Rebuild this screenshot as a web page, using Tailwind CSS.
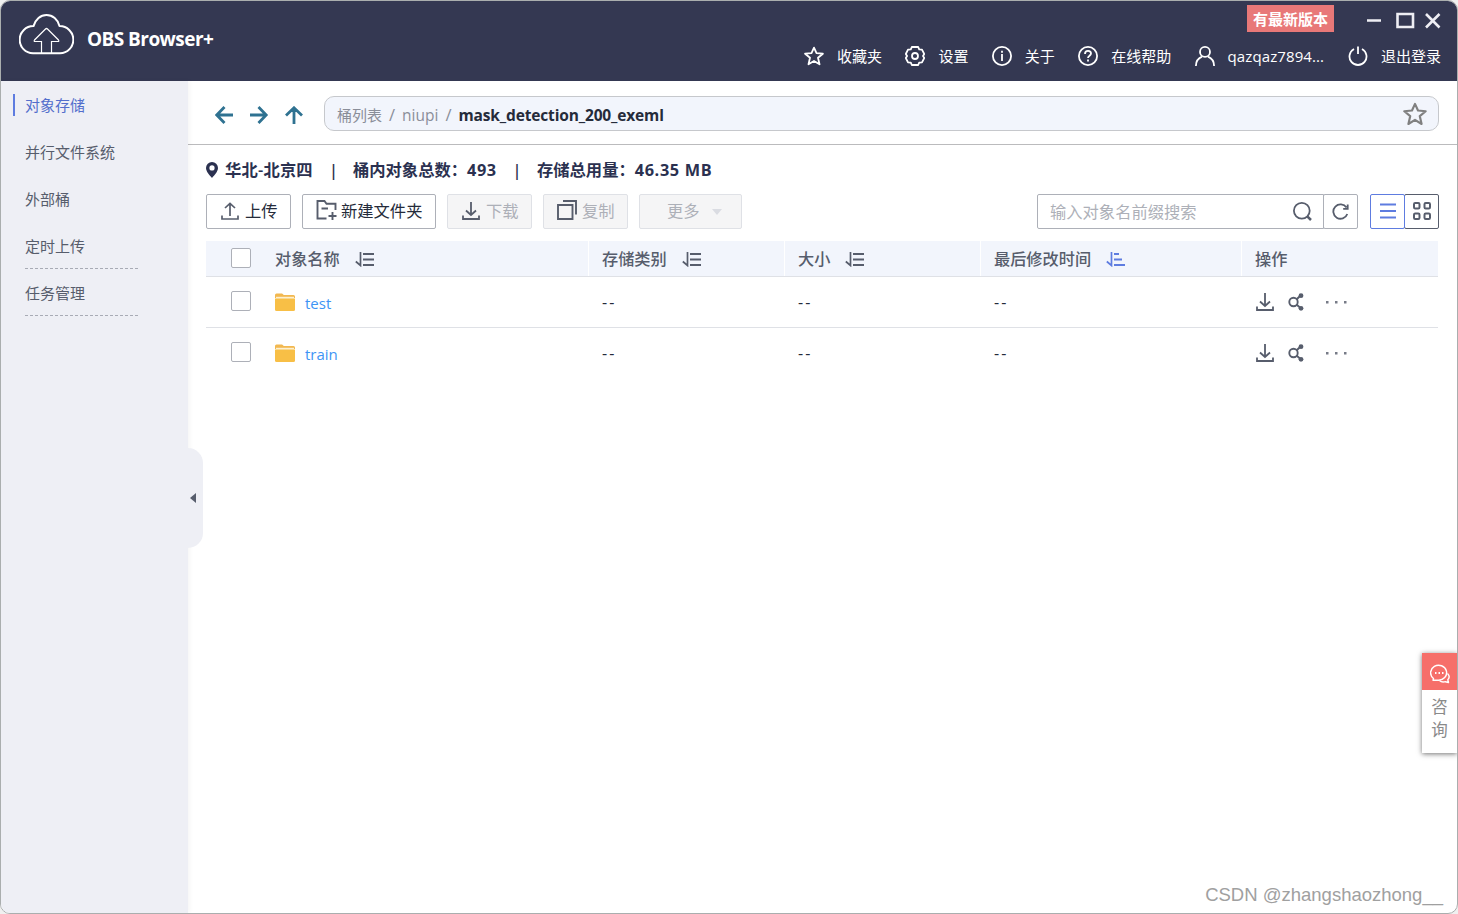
<!DOCTYPE html>
<html lang="zh-CN">
  <head>
    <meta charset="utf-8" />
    <title>OBS Browser+</title>
    <meta name="viewport" content="width=device-width, initial-scale=1" />
    <script src="https://cdn.jsdelivr.net/npm/@tailwindcss/browser@4"></script>
  </head>

  <body class="bg-[#f0f0f0] overflow-hidden font-['Open_Sans','Noto_Sans_CJK_SC',sans-serif] text-[15px] text-[#575d6c]">
    <!-- shared icons -->
    <svg class="hidden">
      <symbol id="star" viewBox="0 0 20 20">
        <path d="M10 1.6l2.5 5.5 6.4.6-4.9 4.1 1.5 6.5L10 14.9l-5.5 3.4L6 11.8 1.1 7.7l6.4-.6z" fill="none" stroke="currentColor" stroke-width="1.8" stroke-linejoin="round" />
      </symbol>
      <symbol id="download" viewBox="0 0 18 18">
        <path d="M9 0v12.5M4 8.5l5 4.5 5-4.5M1 13.5V17h16v-3.5" fill="none" stroke="currentColor" stroke-width="1.8" />
      </symbol>
      <symbol id="share" viewBox="0 0 16 18">
        <g fill="none" stroke="currentColor" stroke-width="1.9">
          <circle cx="5.5" cy="9" r="4.2" />
          <path d="M8.5 6.5L12 3M8.5 11.5l4 3.5" />
        </g>
        <circle cx="13" cy="2.7" r="2.4" fill="currentColor" />
        <circle cx="13" cy="15.3" r="2.4" fill="currentColor" />
      </symbol>
      <symbol id="sort" viewBox="0 0 19 15">
        <path d="M5.5 0v13.5L.8 9.5" fill="none" stroke="currentColor" stroke-width="1.7" />
        <path d="M8 2h11M8 7.5h11M8 13h11" fill="none" stroke="currentColor" stroke-width="2" />
      </symbol>
      <symbol id="folder" viewBox="0 0 20 18">
        <path d="M0 2A1.5 1.5 0 0 1 1.5.5h5.6L8.8 2h9.7A1.5 1.5 0 0 1 20 3.5V5H0z" fill="#f2b850" />
        <rect x="1" y="3.8" width="18" height="2" fill="#fdf0d0" />
        <path d="M0 5.500h20v11a1.5 1.5 0 0 1-1.5 1.5h-17A1.5 1.5 0 0 1 0 16.500z" fill="#f8bf46" />
      </symbol>
    </svg>

    <div class="relative w-[1458px] h-[914px] flex flex-col border border-[#aaaeae] rounded-[10px] bg-white overflow-hidden">
      <header class="h-20 shrink-0 flex justify-between bg-[#343852] text-white">
        <div class="flex items-start pl-[18px] pt-[13px]">
          <svg class="w-[55px] h-[41px]" viewBox="0 0 55 41" fill="none" stroke="#fff">
            <path d="M14 39.3A13.500 13.500 0 0 1 14.500 12.100C16.500 5.500 21.500 1 27.500 1S39 5.500 40.500 12.100A13.500 13.500 0 0 1 41 39.300z" stroke-width="2" stroke-linejoin="round" />
            <path d="M22.500 39V27.500H16c-1 0-1-.8-.5-1.500l11-11c.7-.7 1.300-.7 2 0l11 11c.5.7.5 1.500-.5 1.500h-6.500V39" stroke-width="1.200" />
          </svg>
          <div class="ml-[13px] mt-[11px] text-[19px] leading-7 font-bold tracking-[-0.55px] whitespace-nowrap">OBS Browser+</div>
        </div>

        <div class="flex flex-col items-end pr-[16px]">
          <div class="flex items-center h-[34px] pt-[1px]">
            <div class="w-[87px] h-[27px] mr-[32px] bg-[#e87878] text-center leading-[28px] font-bold">有最新版本</div>
            <svg class="w-[75px] h-[17px] mt-[3px]" viewBox="0 0 75 17" fill="none" stroke="#eeeef4" stroke-width="2.600">
              <path d="M1 8.500h14M31.500 2h15.500v13h-15.500zM60 2l13.500 13.500M73.500 2l-13.500 13.500" />
            </svg>
          </div>
          <nav class="flex items-center gap-[23.400px] h-[42px] whitespace-nowrap">
            <a class="flex items-center gap-[13px]">
              <svg class="size-5"><use href="#star" /></svg>收藏夹
            </a>
            <a class="flex items-center gap-[13px]">
              <svg class="size-5" viewBox="0 0 20 20" fill="none" stroke="#fff" stroke-width="1.800">
                <path d="M6.800 1h6.400l1 2.400 2.800.3 2.300 4.300-1.300 2 1.300 2-2.300 4.300-2.800.3-1 2.400H6.800l-1-2.400-2.800-.3L.8 12l1.300-2L.8 8 3 3.700l2.800-.3z" stroke-linejoin="round" />
                <circle cx="10" cy="10" r="3" />
              </svg>设置
            </a>
            <a class="flex items-center gap-[13px]">
              <svg class="size-5" viewBox="0 0 20 20" fill="none" stroke="#fff" stroke-width="1.800">
                <circle cx="10" cy="10" r="9.100" />
                <path d="M10 8v7M10 4.800v2" />
              </svg>关于
            </a>
            <a class="flex items-center gap-[13px]">
              <svg class="size-5" viewBox="0 0 20 20" fill="none" stroke="#fff" stroke-width="1.800">
                <circle cx="10" cy="10" r="9.100" />
                <path d="M7 8c0-2 1.300-3.200 3-3.200S13 6 13 7.600c0 2-3 2.200-3 4.400M10 13.500v2" />
              </svg>在线帮助
            </a>
            <a class="flex items-center gap-[13px]">
              <svg class="size-5" viewBox="0 0 20 20" fill="none" stroke="#fff" stroke-width="1.800">
                <circle cx="10" cy="5.900" r="5" />
                <path d="M.9 20c0-5 3-8 6.100-9.300M19.100 20c0-5-3-8-6.100-9.300" />
              </svg>
              <span class="w-[97px] tracking-[0.1px]">qazqaz7894...</span>
            </a>
            <a class="flex items-center gap-[13px]">
              <svg class="size-5" viewBox="0 0 20 20" fill="none" stroke="#fff" stroke-width="1.800">
                <path d="M6 3a8.500 8.500 0 1 0 8 0M10 .5V8" />
              </svg>退出登录
            </a>
          </nav>
        </div>
      </header>

      <div class="flex flex-1 min-h-0">
        <aside class="relative z-10 w-[187px] shrink-0 bg-[#eeeff5] shadow-[2px_0_4px_rgba(0,0,0,0.04)]">
          <ul class="pl-6 leading-[22px]">
            <li class="-ml-3 mt-[13px] pl-[10px] border-l-2 border-[#5e7ce0] text-[#526ecc]">对象存储</li>
            <li class="mt-[25px]">并行文件系统</li>
            <li class="mt-[25px]">外部桶</li>
            <li class="mt-[25px]">定时上传</li>
            <li><svg class="block mt-[11px] w-[114px] h-px"><path d="M0 .5h114" stroke="#a8abb5" stroke-dasharray="3 2" /></svg></li>
            <li class="mt-[13px]">任务管理</li>
            <li><svg class="block mt-[11px] w-[114px] h-px"><path d="M0 .5h114" stroke="#a8abb5" stroke-dasharray="3 2" /></svg></li>
          </ul>
          <!-- collapse handle -->
          <div class="absolute left-[187px] top-[367px] w-[15px] h-[100px] rounded-r-[15px] bg-[#eeeff5]">
            <svg class="absolute left-[2px] top-[45px] w-[6px] h-[10px]" viewBox="0 0 6 10"><path d="M6 0v10L0 5z" fill="#575d6c" /></svg>
          </div>
        </aside>

        <main class="flex-1 min-w-0">
          <div class="h-16 flex items-center border-b border-[#bbbbbd] pl-[27px] pr-[18px]">
            <svg class="w-[88px] h-[18px] mt-[5px]" viewBox="0 0 88 18" fill="none" stroke="#2f7291" stroke-width="2.800">
              <path d="M18 9H2M9.500 1L1.800 9l7.700 8M35 9h16M43.500 1l7.700 8-7.700 8M79 18V2M71 9.500l8-7.700 8 7.700" />
            </svg>
            <div class="ml-[21px] mt-[2px] flex-1 h-[35px] flex items-center justify-between rounded-[10px] border border-[#c6c8cc] bg-[#f2f5fc] pl-[12px] pr-[11px]">
              <div class="pt-[3px] whitespace-nowrap text-[#8a8e99]">
                桶列表<span class="px-[7px] text-[16.500px]">/</span><span class="text-[15.500px]">niupi</span><span class="px-[7px] text-[16.500px]">/</span><span class="text-[15.500px] tracking-[-0.150px] font-bold text-[#252b3a]">mask_detection_200_exeml</span>
              </div>
              <svg class="size-6 text-[#808080]"><use href="#star" /></svg>
            </div>
          </div>

          <div class="flex items-center h-[22px] mt-[14px] pl-[18px] text-[16.300px] font-bold text-[#2b3150] whitespace-nowrap">
            <svg class="w-[12px] h-4 mr-[7px]" viewBox="0 0 12 16"><path fill-rule="evenodd" d="M6 0a6 6 0 0 1 6 6c0 3.500-3.500 7-6 10C3.500 13 0 9.500 0 6a6 6 0 0 1 6-6zm0 3.300a2.600 2.600 0 1 0 0 5.200 2.600 2.600 0 0 0 0-5.200z" fill="#2b3150" /></svg>
            <span class="w-[89px] font-semibold tracking-[0.200px]">华北-北京四</span>
            <span class="w-[39px] text-center font-semibold">|</span>
            <span class="w-[144px]">桶内对象总数：<span class="tracking-[0.600px]">493</span></span>
            <span class="w-[40px] text-center font-semibold">|</span>
            <span>存储总用量：<span class="tracking-[0.650px]">46.35 MB</span></span>
          </div>

          <div class="flex items-center mt-[13px] h-[35px] pl-[18px] pr-[18px] text-[16.300px] whitespace-nowrap">
            <div class="flex gap-[11px] text-[#252b3a]">
              <button class="w-[85px] h-[35px] flex items-center pl-[14px] gap-[6px] border border-[#adb0b8] rounded-[2px]">
                <svg class="w-[18px] h-[18px] shrink-0 mb-[2px]" viewBox="0 0 18 18" fill="none" stroke="#575d6c" stroke-width="1.700"><path d="M9 14V1.500M4 6l5-4.700L14 6M1 13.500V17h16v-3.500" /></svg>上传
              </button>
              <button class="w-[134px] h-[35px] flex items-center pl-[13px] gap-[4px] border border-[#adb0b8] rounded-[2px]">
                <svg class="w-[21px] h-[20px] shrink-0 mb-[3px]" viewBox="0 0 21 20" fill="none" stroke="#575d6c" stroke-width="1.900"><path d="M10.500 18.500H1.500V1h7l2 2.700h9V10M5.500 8.500H12M16.500 12v8M12.500 16h8" /></svg>新建文件夹
              </button>
              <button class="w-[85px] h-[35px] flex items-center pl-[14px] gap-[6px] border border-[#dfe1e6] rounded-[2px] bg-[#f5f5f6] text-[#adb0b8]">
                <svg class="w-[18px] h-[18px] shrink-0 mb-[2px] text-[#575d6c]"><use href="#download" /></svg>下载
              </button>
              <button class="w-[85px] h-[35px] flex items-center pl-[13px] gap-[5px] border border-[#dfe1e6] rounded-[2px] bg-[#f5f5f6] text-[#adb0b8]">
                <svg class="w-5 h-5 shrink-0 mb-[3px]" viewBox="0 0 20 20" fill="none" stroke="#575d6c" stroke-width="1.900"><path d="M1 5h14.500v14H1zM6 1h13v13.500" /></svg>复制
              </button>
              <button class="w-[103px] h-[35px] flex items-center pl-[27px] gap-[12px] border border-[#dfe1e6] rounded-[2px] bg-[#f5f5f6] text-[#adb0b8]">
                更多
                <svg class="w-[10px] h-[6px]" viewBox="0 0 10 6"><path d="M0 0h10L5 6z" fill="#dadce2" /></svg>
              </button>
            </div>

            <div class="ml-auto flex">
              <div class="w-[287px] h-[35px] flex items-center justify-between border border-[#adb0b8] rounded-l-[2px] pl-3 pr-[11px] text-[#adb0b8]">
                <span class="pt-[1px]">输入对象名前缀搜索</span>
                <svg class="size-[19px] mb-[1px]" viewBox="0 0 19 19" fill="none" stroke="#575d6c" stroke-width="1.800"><circle cx="8.800" cy="8.800" r="7.900" /><path d="M14.300 14.300l3.700 3.700" stroke-width="2.500" /></svg>
              </div>
              <div class="-ml-px w-[35px] h-[35px] flex items-center justify-center border border-[#adb0b8] rounded-[2px]">
                <svg class="size-[17px]" viewBox="0 0 17 17" fill="none" stroke="#575d6c" stroke-width="1.800"><path d="M15.300 11a7.200 7.200 0 1 1-.8-6.500M15.700 1.500v4.300h-4.500" /></svg>
              </div>
              <div class="ml-3 z-10 w-[35px] h-[35px] flex items-center justify-center border border-[#5e7ce0] rounded-[2px]">
                <svg class="w-4 h-4 mb-[1px]" viewBox="0 0 16 16"><path d="M0 1.500h16M0 8h16M0 14.500h16" stroke="#5e7ce0" stroke-width="1.800" /></svg>
              </div>
              <div class="-ml-px w-[35px] h-[35px] flex items-center justify-center border border-[#575d6c] rounded-[2px]">
                <svg class="size-[18px] mb-[1px]" viewBox="0 0 18 18" fill="none" stroke="#575d6c" stroke-width="2"><rect x="1" y="1" width="5.500" height="5.500" rx="1.200" /><rect x="11.500" y="1" width="5.500" height="5.500" rx="1.200" /><rect x="1" y="11.500" width="5.500" height="5.500" rx="1.200" /><rect x="11.500" y="11.500" width="5.500" height="5.500" rx="1.200" /></svg>
              </div>
            </div>
          </div>

          <div class="mt-3 ml-[18px] w-[1232px]">
            <div class="grid grid-cols-[56px_327px_196px_196px_261px_1fr] h-9 bg-[#f2f5fc] border-b border-[#dfe1e6] text-[16.200px] font-medium">
              <div class="flex items-center pl-[25px] pb-[1px]"><span class="block size-[20px] border border-[#adb0b8] rounded-[2px] bg-white"></span></div>
              <div class="flex items-center gap-[15px] pl-[13px] pt-[1px] border-r border-white">对象名称<svg class="w-[19px] h-[15px]"><use href="#sort" /></svg></div>
              <div class="flex items-center gap-[15px] pl-[13px] pt-[1px] border-r border-white">存储类别<svg class="w-[19px] h-[15px]"><use href="#sort" /></svg></div>
              <div class="flex items-center gap-[15px] pl-[13px] pt-[1px] border-r border-white">大小<svg class="w-[19px] h-[15px]"><use href="#sort" /></svg></div>
              <div class="flex items-center gap-[15px] pl-[13px] pt-[1px] border-r border-white">
                最后修改时间
                <svg class="w-[19px] h-[15px] text-[#5e7ce0]" viewBox="0 0 19 15" fill="none" stroke="currentColor">
                  <path d="M5.500 0v13.500L.8 9.500" stroke-width="1.700" />
                  <path d="M8 2h5M8 7.500h8M8 13h11" stroke-width="2" />
                </svg>
              </div>
              <div class="flex items-center pl-[13px] pt-[1px]">操作</div>
            </div>

            <div class="grid grid-cols-[56px_327px_196px_196px_261px_1fr] h-[51px] border-b border-[#dfe1e6] text-[#252b3a]">
              <div class="flex items-center pl-[25px] pb-[2px]"><span class="block size-[20px] border border-[#adb0b8] rounded-[2px]"></span></div>
              <div class="flex items-center gap-[10px] pl-[13px]">
                <svg class="w-5 h-[18px]"><use href="#folder" /></svg>
                <a class="pt-[3px] text-[#3d94f5]">test</a>
              </div>
              <div class="flex items-center pl-[13px] text-[16px] tracking-[2px]">--</div>
              <div class="flex items-center pl-[13px] text-[16px] tracking-[2px]">--</div>
              <div class="flex items-center pl-[13px] text-[16px] tracking-[2px]">--</div>
              <div class="flex items-center pl-[14px] text-[#575d6c]">
                <svg class="w-[18px] h-[18px]"><use href="#download" /></svg>
                <svg class="ml-[14px] w-4 h-[18px]"><use href="#share" /></svg>
                <svg class="ml-[22px] w-[22px] h-[3px]" viewBox="0 0 22 3" fill="#777b87"><path d="M0 0h2.500v2.500H0zM9 0h2.500v2.500H9zM18 0h2.500v2.500H18z" /></svg>
              </div>
            </div>

            <div class="grid grid-cols-[56px_327px_196px_196px_261px_1fr] h-[51px] border-b border-transparent text-[#252b3a]">
              <div class="flex items-center pl-[25px] pb-[2px]"><span class="block size-[20px] border border-[#adb0b8] rounded-[2px]"></span></div>
              <div class="flex items-center gap-[10px] pl-[13px]">
                <svg class="w-5 h-[18px]"><use href="#folder" /></svg>
                <a class="pt-[3px] text-[#3d94f5]">train</a>
              </div>
              <div class="flex items-center pl-[13px] text-[16px] tracking-[2px]">--</div>
              <div class="flex items-center pl-[13px] text-[16px] tracking-[2px]">--</div>
              <div class="flex items-center pl-[13px] text-[16px] tracking-[2px]">--</div>
              <div class="flex items-center pl-[14px] text-[#575d6c]">
                <svg class="w-[18px] h-[18px]"><use href="#download" /></svg>
                <svg class="ml-[14px] w-4 h-[18px]"><use href="#share" /></svg>
                <svg class="ml-[22px] w-[22px] h-[3px]" viewBox="0 0 22 3" fill="#777b87"><path d="M0 0h2.500v2.500H0zM9 0h2.500v2.500H9zM18 0h2.500v2.500H18z" /></svg>
              </div>
            </div>
          </div>
        </main>
      </div>

      <!-- floating help tab -->
      <div class="absolute right-0 top-[652px] w-[35px] h-[100px] bg-white shadow-[0_1px_5px_rgba(0,0,0,0.55)]">
        <div class="h-[37px] flex items-center justify-center bg-[#f66f6a]">
          <svg class="w-[20px] h-[20px] mt-[4px]" viewBox="0 0 20 20" fill="none" stroke="#fff" stroke-width="1.400" stroke-linejoin="round">
            <path d="M3.500 14.500A8 7.500 0 1 1 8 16.200H3z" />
            <path d="M17.500 9.500c2 2 2 4.500.3 6.300l.7 2.700-3.200-.8c-2 .6-4.300.3-5.800-1.200" />
            <path d="M5 9h1.500M8.500 9H10M12 9h1.500" stroke-width="1.800" />
          </svg>
        </div>
        <div class="pt-[6px] text-center text-[16.500px] leading-[22.500px] text-[#8a8a8a]">咨<br />询</div>
      </div>

      <div class="absolute right-[14px] bottom-[6px] font-['Liberation_Sans',sans-serif] text-[18.500px] leading-[24px] text-[#a0a0a0] whitespace-nowrap">CSDN @zhangshaozhong__</div>
    </div>
  </body>
</html>
